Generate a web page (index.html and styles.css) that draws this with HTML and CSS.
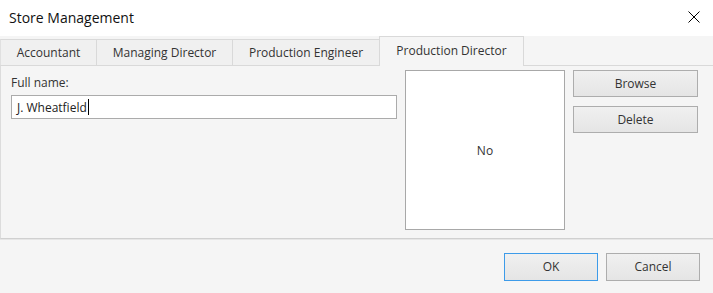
FILE: index.html
```html
<!DOCTYPE html>
<html>
	<head>
		<title>Store Management</title>
		<link rel="stylesheet" href="styles.css">
	</head>
	<body>
		<div class="dialog">
			<div class="titlebar">
				<span class="title">Store Management</span>
				<span class="close">
					<svg width="12" height="12" viewBox="0 0 12 12"><path d="M0.5 0.5 L11.5 11.5 M11.5 0.5 L0.5 11.5" stroke="#000" stroke-width="1" fill="none"/></svg>
				</span>
			</div>
			<div class="tabs">
				<div class="tab t1">Accountant</div>
				<div class="tab t2">Managing Director</div>
				<div class="tab t3">Production Engineer</div>
				<div class="tab t4 active">Production Director</div>
			</div>
			<div class="page">
				<div class="field">
					<div class="label">Full name:</div>
					<div class="textbox">J. Wheatfield<span class="caret"></span></div>
				</div>
				<div class="photo">No</div>
				<div class="side">
					<div class="btn">Browse</div>
					<div class="btn">Delete</div>
				</div>
			</div>
			<div class="footer">
				<div class="btn wide default">OK</div>
				<div class="btn wide">Cancel</div>
			</div>
		</div>
	</body>
</html>
```

FILE: styles.css
```css
html, body {
	margin: 0;
	padding: 0;
}
body {
	font-family: "Open Sans", "Noto Sans", sans-serif;
	font-size: 12px;
	color: #333;
	background: #f5f5f5;
}
.dialog {
	width: 713px;
	height: 293px;
	background: #f5f5f5;
	overflow: hidden;
}
.titlebar {
	height: 36px;
	background: #fff;
	display: flex;
	align-items: center;
	justify-content: space-between;
}
.title {
	font-size: 14px;
	color: #111;
	padding-left: 9px;
	margin-top: -2px;
}
.close {
	width: 12px;
	height: 12px;
	margin-right: 13px;
	margin-top: -2px;
	display: flex;
}
.tabs {
	display: flex;
	align-items: flex-end;
	height: 29px;
}
.tab {
	height: 25px;
	line-height: 25px;
	text-align: center;
	background: #f0f0f0;
	border: 1px solid #d9d9d9;
	border-bottom: none;
	border-right: none;
	box-sizing: content-box;
}
.t1 { width: 95px; border-left-color: #e0e0e0; }
.t2 { width: 135px; }
.t3 { width: 146px; }
.t4 { width: 143px; }
.tab.active {
	height: 29px;
	line-height: 27px;
	background: #f5f5f5;
	border: 1px solid #d9d9d9;
	border-bottom: none;
	margin-bottom: -1px;
}
.page {
	display: flex;
	align-items: flex-start;
	height: 168px;
	padding: 4px 0 0 10px;
	border-top: 1px solid #d9d9d9;
	border-left: 1px solid #dcdcdc;
	border-bottom: 1px solid #d0d0d0;
	box-shadow: 0 1px 0 #e6e6e6;
}
.field {
	width: 386px;
}
.label {
	margin-top: 4px;
	height: 21px;
	line-height: 18px;
}
.textbox {
	height: 22px;
	background: #fff;
	border: 1px solid #ababab;
	padding-left: 5px;
	color: #222;
	display: flex;
	align-items: center;
}
.caret {
	display: inline-block;
	width: 1px;
	height: 16px;
	background: #000;
	margin-left: 1px;
}
.photo {
	width: 158px;
	height: 158px;
	margin-left: 8px;
	background: #fff;
	border: 1px solid #a8a8a8;
	display: flex;
	align-items: center;
	justify-content: center;
}
.side {
	display: flex;
	flex-direction: column;
	gap: 9px;
	margin-left: 8px;
}
.btn {
	width: 123px;
	height: 25px;
	line-height: 25px;
	text-align: center;
	border: 1px solid #adadad;
	background: linear-gradient(#f0f0f0, #e5e5e5);
	color: #333;
}
.footer {
	display: flex;
	justify-content: flex-end;
	gap: 8px;
	padding: 14px 13px 0 0;
}
.btn.wide {
	width: 92px;
	height: 26px;
	line-height: 26px;
}
.btn.default {
	border-color: #3d9be9;
}
```
